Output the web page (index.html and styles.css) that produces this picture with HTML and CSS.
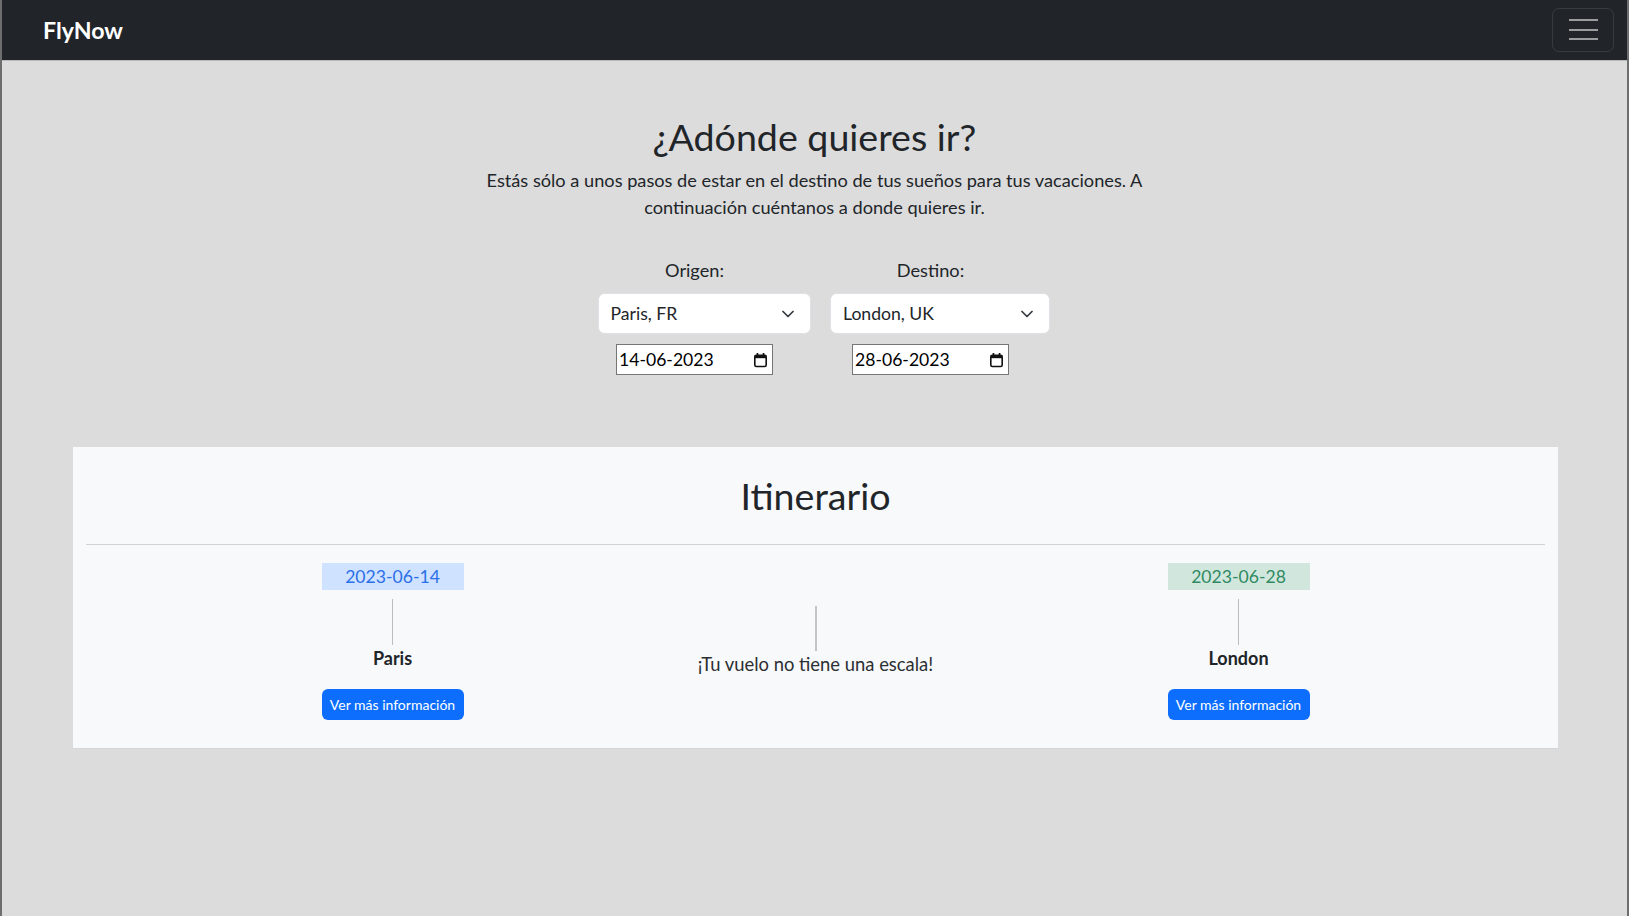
FILE: index.html
```html
<!DOCTYPE html>
<html lang="es">
<head>
<meta charset="utf-8">
<title>FlyNow</title>
<link rel="stylesheet" href="styles.css">
</head>
<body>
<div class="page">
  <nav class="navbar">
    <a class="brand" href="#">FlyNow</a>
    <button class="toggler" type="button" aria-label="Menú">
      <span class="toggler-bar"></span>
      <span class="toggler-bar"></span>
      <span class="toggler-bar"></span>
    </button>
  </nav>

  <main class="main">
    <section class="hero">
      <h1 class="hero-title">¿Adónde quieres ir?</h1>
      <p class="hero-text">Estás sólo a unos pasos de estar en el destino de tus sueños para tus vacaciones. A<br>continuación cuéntanos a donde quieres ir.</p>

      <div class="search">
        <div class="field">
          <label class="field-label">Origen:</label>
          <div class="select-wrap select-origin">
            <select class="select">
              <option>Paris, FR</option>
            </select>
            <svg class="chevron" width="12" height="8" viewBox="0 0 12 8"><path d="M1 1.5 6 6.5 11 1.5" fill="none" stroke="#343a40" stroke-width="1.7" stroke-linecap="round" stroke-linejoin="round"/></svg>
          </div>
          <div class="date">
            <span class="date-text">14-06-2023</span>
            <svg class="cal" width="15" height="16" viewBox="0 0 15 16"><rect x="1.8" y="3.3" width="11.4" height="11.2" rx="1.6" fill="none" stroke="#111" stroke-width="1.6"/><rect x="1.8" y="3" width="11.4" height="3.2" fill="#111"/><rect x="3.6" y="1" width="1.7" height="3" fill="#111"/><rect x="9.7" y="1" width="1.7" height="3" fill="#111"/></svg>
          </div>
        </div>
        <div class="field">
          <label class="field-label">Destino:</label>
          <div class="select-wrap select-dest">
            <select class="select">
              <option>London, UK</option>
            </select>
            <svg class="chevron" width="12" height="8" viewBox="0 0 12 8"><path d="M1 1.5 6 6.5 11 1.5" fill="none" stroke="#343a40" stroke-width="1.7" stroke-linecap="round" stroke-linejoin="round"/></svg>
          </div>
          <div class="date">
            <span class="date-text">28-06-2023</span>
            <svg class="cal" width="15" height="16" viewBox="0 0 15 16"><rect x="1.8" y="3.3" width="11.4" height="11.2" rx="1.6" fill="none" stroke="#111" stroke-width="1.6"/><rect x="1.8" y="3" width="11.4" height="3.2" fill="#111"/><rect x="3.6" y="1" width="1.7" height="3" fill="#111"/><rect x="9.7" y="1" width="1.7" height="3" fill="#111"/></svg>
          </div>
        </div>
      </div>
    </section>

    <section class="card">
      <h2 class="card-title">Itinerario</h2>
      <hr class="divider">
      <div class="timeline">
        <div class="stop">
          <div class="badge badge-blue">2023-06-14</div>
          <div class="vline"></div>
          <div class="city">Paris</div>
          <button class="btn" type="button">Ver más información</button>
        </div>
        <div class="stopover">
          <div class="vline-mid"></div>
          <p class="stopover-text">¡Tu vuelo no tiene una escala!</p>
        </div>
        <div class="stop">
          <div class="badge badge-green">2023-06-28</div>
          <div class="vline"></div>
          <div class="city">London</div>
          <button class="btn" type="button">Ver más información</button>
        </div>
      </div>
    </section>
  </main>
</div>
</body>
</html>
```

FILE: styles.css
```css
* { box-sizing: border-box; }

html, body {
  margin: 0;
  padding: 0;
}

body {
  background: #dcdcdc;
  color: #212529;
  font-family: "Lato", "Noto Sans", sans-serif;
  font-size: 17.6px;
}

.page {
  min-height: 100vh;
  border-left: 2px solid #6e6e6e;
  border-right: 2px solid #6e6e6e;
}

/* Navbar */
.navbar {
  height: 61px;
  background: #212529;
  border-bottom: 1px solid #b9b9b9;
  display: flex;
  align-items: center;
  justify-content: space-between;
  padding: 0 13px 1px 41px;
}

.brand {
  color: #fff;
  font-weight: 700;
  font-size: 23.2px;
  text-decoration: none;
}

.toggler {
  width: 62px;
  height: 44px;
  padding: 0;
  background: transparent;
  border: 1px solid rgba(255, 255, 255, 0.1);
  border-radius: 7px;
  display: flex;
  flex-direction: column;
  align-items: center;
  justify-content: center;
  gap: 7.5px;
}

.toggler-bar {
  display: block;
  width: 29px;
  height: 2px;
  background: rgba(255, 255, 255, 0.55);
}

/* Hero */
.hero {
  text-align: center;
}

.hero-title {
  margin: 52px 0 6px;
  font-size: 37.6px;
  font-weight: 400;
  line-height: 48px;
}

.hero-text {
  margin: 0 auto;
  max-width: 760px;
  font-size: 18.2px;
  line-height: 27px;
}

.search {
  display: flex;
  justify-content: center;
  margin-top: 36px;
  padding-right: 4px;
}

.field {
  width: 236px;
  display: flex;
  flex-direction: column;
  align-items: center;
}

.field-label {
  font-size: 18.2px;
  line-height: 27px;
  margin-bottom: 9px;
}

.select-wrap {
  position: relative;
  margin-left: 19px;
}

.select-origin { width: 213px; }
.select-dest { width: 220px; }

.select {
  appearance: none;
  -webkit-appearance: none;
  width: 100%;
  height: 41px;
  padding: 0 36px 0 12px;
  border: 1px solid #dee2e6;
  border-radius: 6.6px;
  background: #fff;
  color: #212529;
  font-family: inherit;
  font-size: 17.6px;
}

.chevron {
  position: absolute;
  right: 17px;
  top: 17px;
}

.date {
  margin-top: 10px;
  width: 157px;
  height: 31px;
  border: 1px solid #767676;
  background: #fff;
  display: flex;
  align-items: center;
  justify-content: space-between;
  padding: 0 4px 0 2px;
  color: #000;
  font-size: 17.6px;
}

.cal { display: block; }

/* Itinerary card */
.card {
  margin: 72px 69px 0 71px;
  background: #f8f9fa;
  padding: 25px 13px 28px;
  box-shadow: 0 1px 0 #d6d6d6;
}

.card-title {
  margin: 0;
  text-align: center;
  font-size: 37.6px;
  font-weight: 400;
  line-height: 48px;
}

.divider {
  margin: 24px 0 18px;
  border: 0;
  border-top: 1px solid #d1d2d3;
}

.timeline {
  display: grid;
  grid-template-columns: repeat(3, 423px);
  justify-content: center;
}

.stop {
  justify-self: center;
  width: 142px;
  display: flex;
  flex-direction: column;
  text-align: center;
}

.badge {
  height: 27px;
  line-height: 27px;
  font-size: 17.6px;
}

.badge-blue {
  background: #cfe2ff;
  color: #2c6fe8;
}

.badge-green {
  background: #d1e7dd;
  color: #2f8a62;
}

.vline {
  width: 1px;
  height: 46px;
  margin: 9px auto 0;
  background: #bdbdbd;
}

.city {
  font-weight: 700;
  font-size: 18px;
  line-height: 27px;
}

.btn {
  margin-top: 17px;
  height: 31px;
  padding: 0 8px;
  border: 0;
  border-radius: 6px;
  background: #0d6efd;
  color: #fff;
  font-family: inherit;
  font-size: 14px;
}

.stopover {
  align-self: center;
  display: flex;
  flex-direction: column;
  align-items: center;
}

.vline-mid {
  width: 2px;
  height: 45px;
  background: #c4c4c4;
}

.stopover-text {
  margin: 0;
  font-size: 18.4px;
  line-height: 27px;
  color: #2b2f33;
}
```
